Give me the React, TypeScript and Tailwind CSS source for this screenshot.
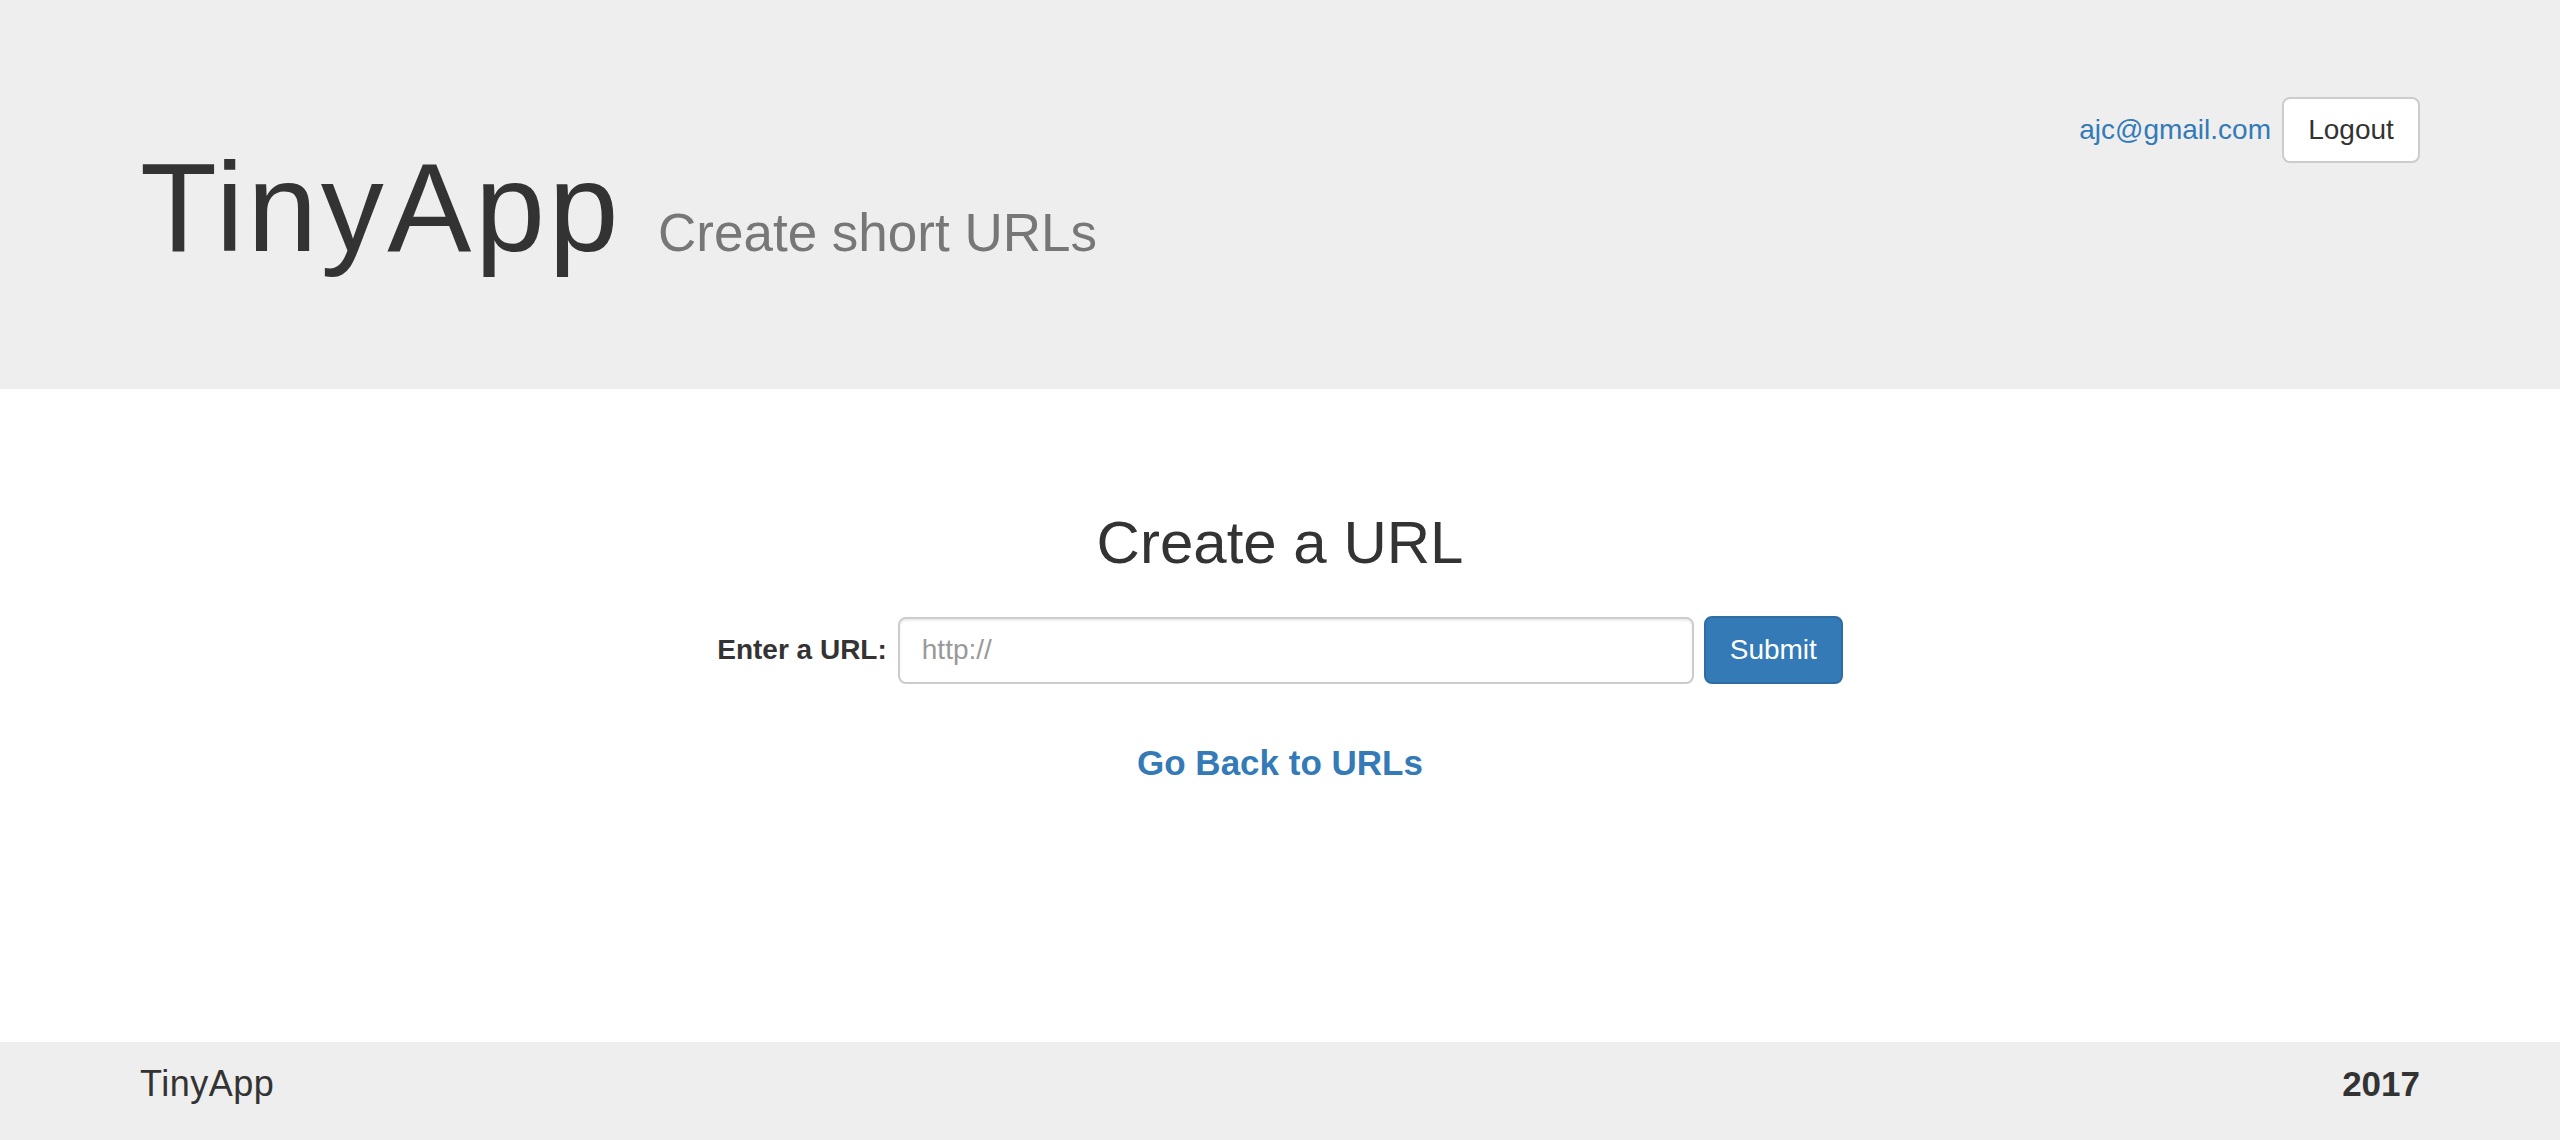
const font = "font-['Liberation_Sans','Helvetica_Neue',Helvetica,Arial,sans-serif]";

const Header = () => {
  return (
    <header className="h-[389px] bg-[#eeeeee]">
      <div className="mx-auto flex w-[2340px] items-start justify-between px-[30px]">
        <div className="pt-[139px]">
          <h1 className="flex items-baseline gap-[36px] text-[126px] leading-[1.1] font-normal tracking-[3.5px] text-[#333333]">
            TinyApp
            <span className="text-[53px] leading-none tracking-normal text-[#777777]">
              Create short URLs
            </span>
          </h1>
        </div>
        <div className="flex items-center gap-[11px] pt-[97px]">
          <a href="#" className="text-[28px] leading-[40px] text-[#337ab7]">
            ajc@gmail.com
          </a>
          <button
            type="button"
            className="h-[66px] w-[138px] rounded-[8px] border-2 border-[#cccccc] bg-white text-[28px] leading-[40px] text-[#333333]"
          >
            Logout
          </button>
        </div>
      </div>
    </header>
  );
};

const CreateForm = () => {
  return (
    <main className="flex flex-1 flex-col items-center pt-[121px]">
      <h2 className="text-[60px] leading-[1.1] font-normal text-[#333333]">
        Create a URL
      </h2>
      <form className="mt-[40px] flex items-center">
        <label className="text-[28px] leading-[40px] font-bold text-[#333333]">
          Enter a URL:
        </label>
        <input
          type="text"
          placeholder="http://"
          className="ml-[11px] h-[67px] w-[796px] rounded-[8px] border-2 border-[#cccccc] px-[22px] text-[28px] text-[#555555] shadow-[inset_0_2px_2px_rgba(0,0,0,0.075)] outline-none placeholder:text-[#999999]"
        />
        <button
          type="submit"
          className="ml-[10px] h-[68px] w-[139px] rounded-[8px] border-2 border-[#2e6da4] bg-[#337ab7] text-[28px] leading-[40px] text-white"
        >
          Submit
        </button>
      </form>
      <a
        href="#"
        className="mt-[60px] text-[35px] leading-[1.1] font-bold text-[#337ab7]"
      >
        Go Back to URLs
      </a>
    </main>
  );
};

const Footer = () => {
  return (
    <footer className="h-[98px] bg-[#eeeeee]">
      <div className="mx-auto flex w-[2340px] items-start justify-between px-[30px] pt-[22px]">
        <span className="text-[36px] leading-[40px] tracking-[0.5px] text-[#333333]">
          TinyApp
        </span>
        <span className="text-[35px] leading-[40px] font-bold text-[#333333]">
          2017
        </span>
      </div>
    </footer>
  );
};

export default function App() {
  return (
    <div className={`flex min-h-[1140px] flex-col bg-white ${font}`}>
      <Header />
      <CreateForm />
      <Footer />
    </div>
  );
}
